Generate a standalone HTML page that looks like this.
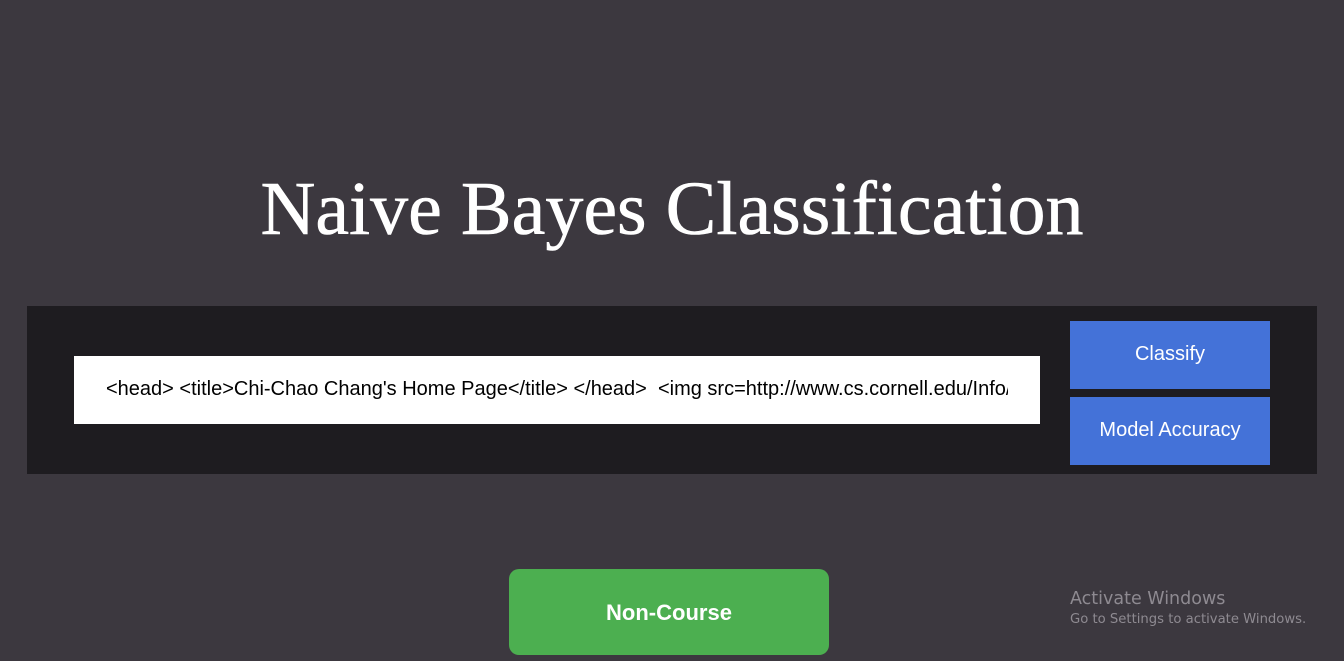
<!DOCTYPE html>
<html><head><style>
body{margin:0;width:1344px;height:661px;background:#3c383f;position:relative;overflow:hidden;font-family:"Liberation Sans",Arial,sans-serif}
h1{position:absolute;left:0;width:1344px;top:166px;margin:0;text-align:center;font-family:"Liberation Serif",Georgia,serif;font-weight:normal;font-size:76px;color:#fff;letter-spacing:0;-webkit-text-stroke:0.6px #fff}
.panel{position:absolute;left:27px;top:306px;width:1290px;height:168px;background:#1e1c20}
.inp{position:absolute;left:74px;top:356px;width:966px;height:68px;background:#fff}
.inp span{position:absolute;left:32px;top:0;width:902px;overflow:hidden;white-space:nowrap;font-size:20px;line-height:67px;color:#000}
.btn{position:absolute;left:1070px;width:200px;height:68px;background:#4472d8;color:#fff;font-size:20px;text-align:center;line-height:67px}
.green{position:absolute;left:509px;top:569px;width:320px;height:86px;background:#4caf50;border-radius:10px;color:#fff;font-weight:bold;font-size:22px;text-align:center;line-height:87px}
.aw{position:absolute;left:1070px;top:589px;color:#8e8a91;font-family:"DejaVu Sans",sans-serif}
</style></head><body>
<h1>Naive Bayes Classification</h1>
<div class="panel"></div>
<div class="inp"><span>&lt;head&gt; &lt;title&gt;Chi-Chao Chang's Home Page&lt;/title&gt; &lt;/head&gt;&nbsp; &lt;img src=http://www.cs.cornell.edu/Info/People/chichao</span></div>
<div class="btn" style="top:321px">Classify</div>
<div class="btn" style="top:397px">Model Accuracy</div>
<div class="green">Non-Course</div>
<div class="aw"><div style="font-size:17.5px">Activate Windows</div><div style="font-size:13.2px;margin-top:3px">Go to Settings to activate Windows.</div></div>
</body></html>
